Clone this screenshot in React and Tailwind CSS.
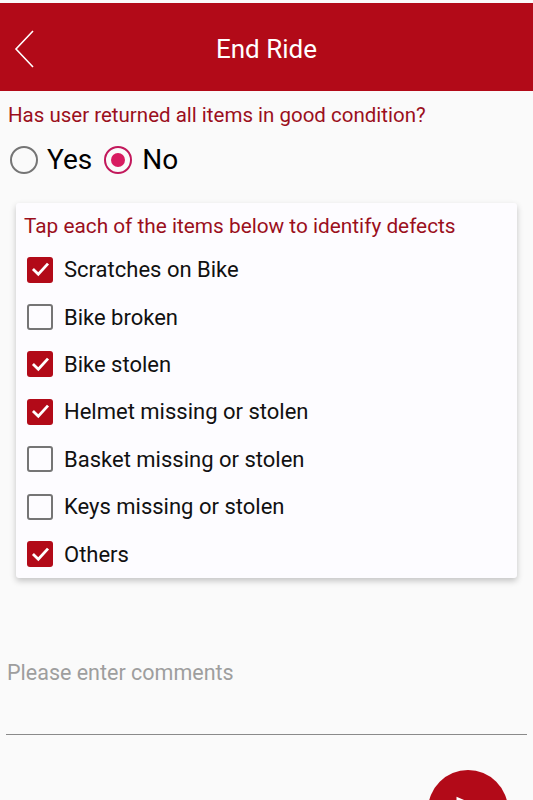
import { useState } from "react";

const items = [
  { label: "Scratches on Bike", checked: true },
  { label: "Bike broken", checked: false },
  { label: "Bike stolen", checked: true },
  { label: "Helmet missing or stolen", checked: true },
  { label: "Basket missing or stolen", checked: false },
  { label: "Keys missing or stolen", checked: false },
  { label: "Others", checked: true },
];

const Checkbox = ({ checked }) =>
  checked ? (
    <div className="w-[26px] h-[26px] rounded-[3px] bg-[#b20a18] flex items-center justify-center">
      <svg viewBox="0 0 24 24" className="w-[21px] h-[21px]" fill="none" stroke="white" strokeWidth="3.2" strokeLinecap="square">
        <path d="M4.5 12.5l5 5L19.5 6.5" />
      </svg>
    </div>
  ) : (
    <div className="w-[26px] h-[26px] rounded-[3px] border-[2.5px] border-[#757575]" />
  );

const App = () => {
  const [returned, setReturned] = useState(false);

  return (
    <div className="min-h-screen bg-[#fafafa] pt-[3px] font-['Roboto',sans-serif] overflow-hidden relative">
      <header className="h-[88px] bg-[#b20a18] relative flex items-center justify-center">
        <svg viewBox="0 0 20 38" className="absolute left-[14px] top-[27px] w-[20px] h-[38px]" fill="none" stroke="white" strokeWidth="1.6">
          <path d="M19 1L2 19l17 18" />
        </svg>
        <h1 className="text-white text-[26px] leading-none pt-[3px]">End Ride</h1>
      </header>

      <p className="px-[8px] pt-[12px] text-[20.5px] leading-[24px] text-[#9b0f1c]">
        Has user returned all items in good condition?
      </p>

      <div className="flex items-center pl-[10px] mt-[13px] h-[40px]">
        <button className="flex items-center" onClick={() => setReturned(true)}>
          <span className="w-[28px] h-[28px] rounded-full border-[2.5px] border-[#757575]" />
          <span className="ml-[9px] text-[28px] leading-none text-black">Yes</span>
        </button>
        <button className="flex items-center ml-[12px]" onClick={() => setReturned(false)}>
          <span className="w-[28px] h-[28px] rounded-full border-[2.5px] border-[#c2185b] flex items-center justify-center">
            <span className="w-[14px] h-[14px] rounded-full bg-[#d81b60]" />
          </span>
          <span className="ml-[10px] text-[28px] leading-none text-black">No</span>
        </button>
      </div>

      <section className="mx-[16px] mt-[23px] w-[501px] bg-[#fdfcff] rounded-[3px] shadow-[0_3px_6px_rgba(0,0,0,0.22)] pt-[11px]">
        <h2 className="px-[8px] text-[20.8px] leading-[24px] text-[#9b0f1c]">
          Tap each of the items below to identify defects
        </h2>
        <ul className="mt-[8px]">
          {items.map((item) => (
            <li key={item.label} className="h-[47.4px] flex items-center pl-[11px]">
              <Checkbox checked={item.checked} />
              <span className="ml-[11px] text-[22px] text-[#111]">{item.label}</span>
            </li>
          ))}
        </ul>
      </section>

      <div className="mx-[6px] mt-[83px] border-b-[1.5px] border-[#8a8a8a] h-[74px]">
        <p className="pl-[1px] text-[21.5px] leading-[24px] text-[#9e9e9e]">Please enter comments</p>
      </div>

      <button className="absolute left-[428px] top-[770px] w-[80px] h-[80px] rounded-full bg-[#b20a18]">
        <svg viewBox="0 0 24 24" className="absolute left-[26px] top-[23px] w-[30px] h-[30px]" fill="white">
          <path d="M2.01 21L23 12 2.01 3 2 10l15 2-15 2z" />
        </svg>
      </button>
    </div>
  );
};

export default App;
